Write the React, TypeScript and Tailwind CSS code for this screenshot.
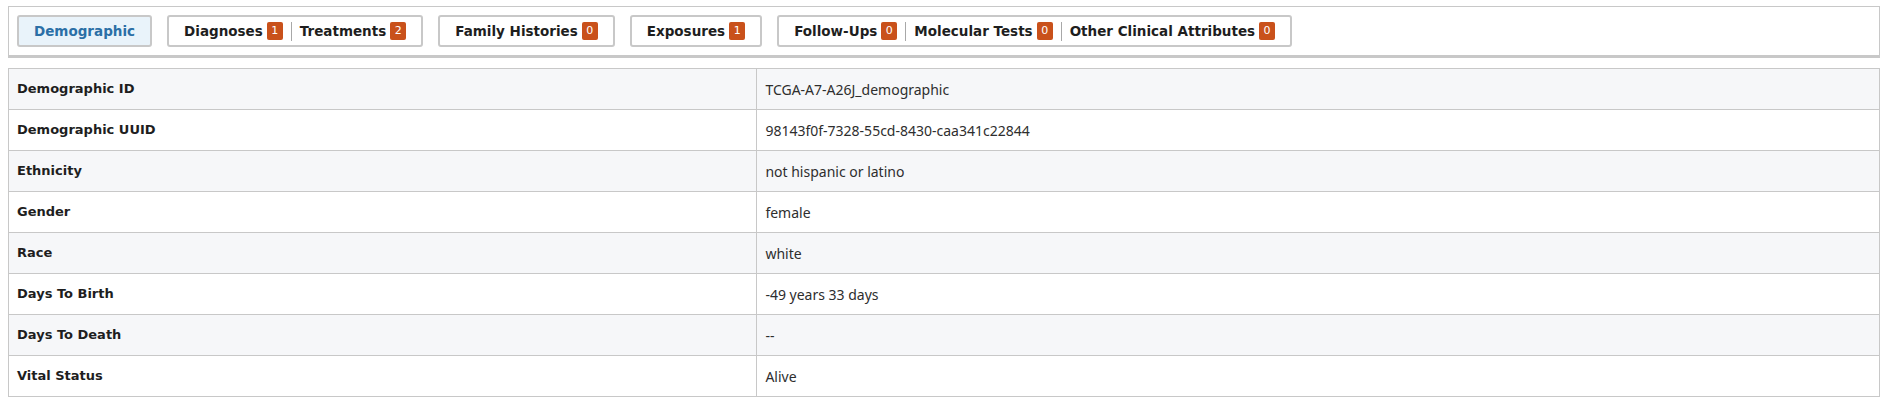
import React from 'react';

type Seg = { label: string; count: number };

const tabs: { segs: Seg[]; active?: boolean }[] = [
  { segs: [{ label: 'Demographic', count: -1 }], active: true },
  {
    segs: [
      { label: 'Diagnoses', count: 1 },
      { label: 'Treatments', count: 2 },
    ],
  },
  { segs: [{ label: 'Family Histories', count: 0 }] },
  { segs: [{ label: 'Exposures', count: 1 }] },
  {
    segs: [
      { label: 'Follow-Ups', count: 0 },
      { label: 'Molecular Tests', count: 0 },
      { label: 'Other Clinical Attributes', count: 0 },
    ],
  },
];

const rows = [
  ['Demographic ID', 'TCGA-A7-A26J_demographic'],
  ['Demographic UUID', '98143f0f-7328-55cd-8430-caa341c22844'],
  ['Ethnicity', 'not hispanic or latino'],
  ['Gender', 'female'],
  ['Race', 'white'],
  ['Days To Birth', '-49 years 33 days'],
  ['Days To Death', '--'],
  ['Vital Status', 'Alive'],
];

const labelFont = "font-['DejaVu_Sans',sans-serif]";

export default function App() {
  return (
    <div className="px-2 pt-1.5 bg-white min-h-[401px]">
      {/* Tab bar */}
      <div className="flex gap-[15px] border border-[#c8c8c8] border-b-[3px] bg-white p-2">
        {tabs.map((tab, i) => (
          <div
            key={i}
            className={`flex h-8 items-center rounded-[3px] border-2 border-[#c8c8c8] px-[15px] text-[13.5px] font-bold ${labelFont} ${
              tab.active ? 'bg-[#e9f3fa] text-[#2b6fa6]' : 'bg-white text-[#1e1e1e]'
            }`}
          >
            {tab.segs.map((seg, j) => (
              <div key={j} className="flex items-center">
                {j > 0 && <div className="mx-2 h-[19px] w-px bg-[#a8a8a8]" />}
                <span>{seg.label}</span>
                {seg.count >= 0 && (
                  <span className="ml-1 flex h-[18px] w-4 items-center justify-center rounded-[2px] bg-[#c9511b] text-[11px] font-normal text-white">
                    {seg.count}
                  </span>
                )}
              </div>
            ))}
          </div>
        ))}
      </div>

      {/* Details table */}
      <table className="mt-[10px] w-full border-collapse border border-[#c8c8c8]">
        <tbody>
          {rows.map(([k, v], i) => (
            <tr key={k} className={i % 2 === 0 ? 'bg-[#f6f7f9]' : 'bg-white'}>
              <td
                className={`h-[41px] w-[40%] border border-[#c8c8c8] px-2 text-[13px] font-bold text-[#1e1e1e] ${labelFont}`}
              >
                {k}
              </td>
              <td className="h-[41px] border border-[#c8c8c8] px-2 font-['Noto_Sans',sans-serif] text-[14px] text-[#2e2e2e]">
                {v}
              </td>
            </tr>
          ))}
        </tbody>
      </table>
    </div>
  );
}
